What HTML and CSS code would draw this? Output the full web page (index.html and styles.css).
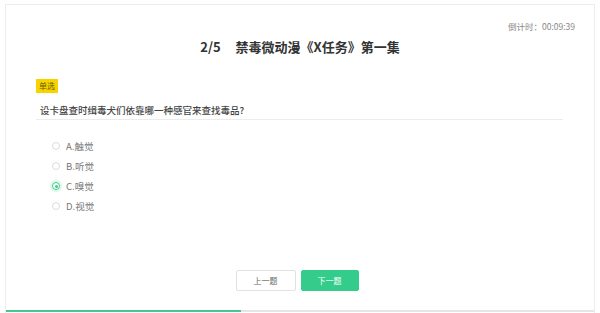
FILE: index.html
```html
<!DOCTYPE html>
<html lang="zh">
<head>
<meta charset="utf-8">
<link rel="stylesheet" href="styles.css">
</head>
<body>
<div class="card">
  <div class="timer">倒计时：00:09:39</div>
  <h1 class="title"><span class="num">2/5</span>禁毒微动漫《X任务》第一集</h1>
  <div class="content">
    <div class="tag">单选</div>
    <div class="question">设卡盘查时缉毒犬们依靠哪一种感官来查找毒品?</div>
    <ul class="options">
      <li class="option"><span class="radio"></span>A.触觉</li>
      <li class="option"><span class="radio"></span>B.听觉</li>
      <li class="option selected"><span class="radio"></span>C.嗅觉</li>
      <li class="option"><span class="radio"></span>D.视觉</li>
    </ul>
  </div>
  <div class="actions">
    <button class="btn btn-prev">上一题</button>
    <button class="btn btn-next">下一题</button>
  </div>
  <div class="progress"><div class="progress-fill" style="width:40%"></div></div>
</div>
</body>
</html>
```
FILE: styles.css
```css
* { box-sizing: border-box; }
html, body { margin: 0; padding: 0; background: #fff; }
body {
  font-family: "Noto Sans CJK SC", "Noto Sans", sans-serif;
  color: #333;
  overflow: hidden;
}
.card {
  margin: 4px 5px 0 5px;
  height: 309px;
  border: 1px solid #ececec;
  border-bottom: none;
  display: flex;
  flex-direction: column;
}
.timer {
  margin-top: 15px;
  padding-right: 19px;
  text-align: right;
  font-size: 8.5px;
  line-height: 12px;
  color: #888;
}
.title {
  margin: 6px 0 0;
  text-align: center;
  font-size: 13px;
  line-height: 18px;
  font-weight: 700;
  color: #333;
}
.num { margin-right: 15px; }
.content {
  margin-top: 23px;
  padding: 0 31px 0 30px;
}
.tag {
  width: fit-content;
  background: #f7d400;
  color: #6b5a00;
  font-size: 8px;
  line-height: 14px;
  height: 14px;
  padding: 0 3px;
}
.question {
  margin-top: 10px;
  padding: 0 0 2px 4px;
  font-size: 9.5px;
  line-height: 14px;
  color: #444;
  font-weight: 500;
  border-bottom: 1px solid #ececec;
}
.options {
  list-style: none;
  margin: 16px 0 0;
  padding: 0 0 0 16px;
}
.option {
  display: flex;
  align-items: center;
  height: 20px;
  font-size: 9.5px;
  color: #777;
}
.radio {
  width: 8px;
  height: 8px;
  border: 1px solid #dcdcdc;
  border-radius: 50%;
  margin-right: 6px;
  flex: none;
  position: relative;
}
.option.selected .radio {
  border-color: #3ccb8d;
  box-shadow: 0 0 0 2px rgba(60, 203, 141, 0.18);
}
.option.selected .radio::after {
  content: "";
  position: absolute;
  left: 1.5px;
  top: 1.5px;
  width: 3px;
  height: 3px;
  border-radius: 50%;
  background: #3ccb8d;
}
.actions {
  margin-top: 54px;
  display: flex;
  justify-content: center;
  gap: 5px;
  padding-right: 6px;
}
.btn {
  height: 21px;
  font-family: inherit;
  font-size: 8px;
  border-radius: 2px;
  padding: 0;
  cursor: pointer;
}
.btn-prev {
  width: 60px;
  background: #fff;
  border: 1px solid #e2e2e2;
  color: #666;
}
.btn-next {
  width: 58px;
  background: #33cc8a;
  border: 1px solid #33cc8a;
  color: #fff;
}
.progress {
  margin-top: auto;
  margin-bottom: 1px;
  height: 2px;
  background: #e6e6e6;
}
.progress-fill {
  height: 100%;
  background: #45c98c;
}
```
